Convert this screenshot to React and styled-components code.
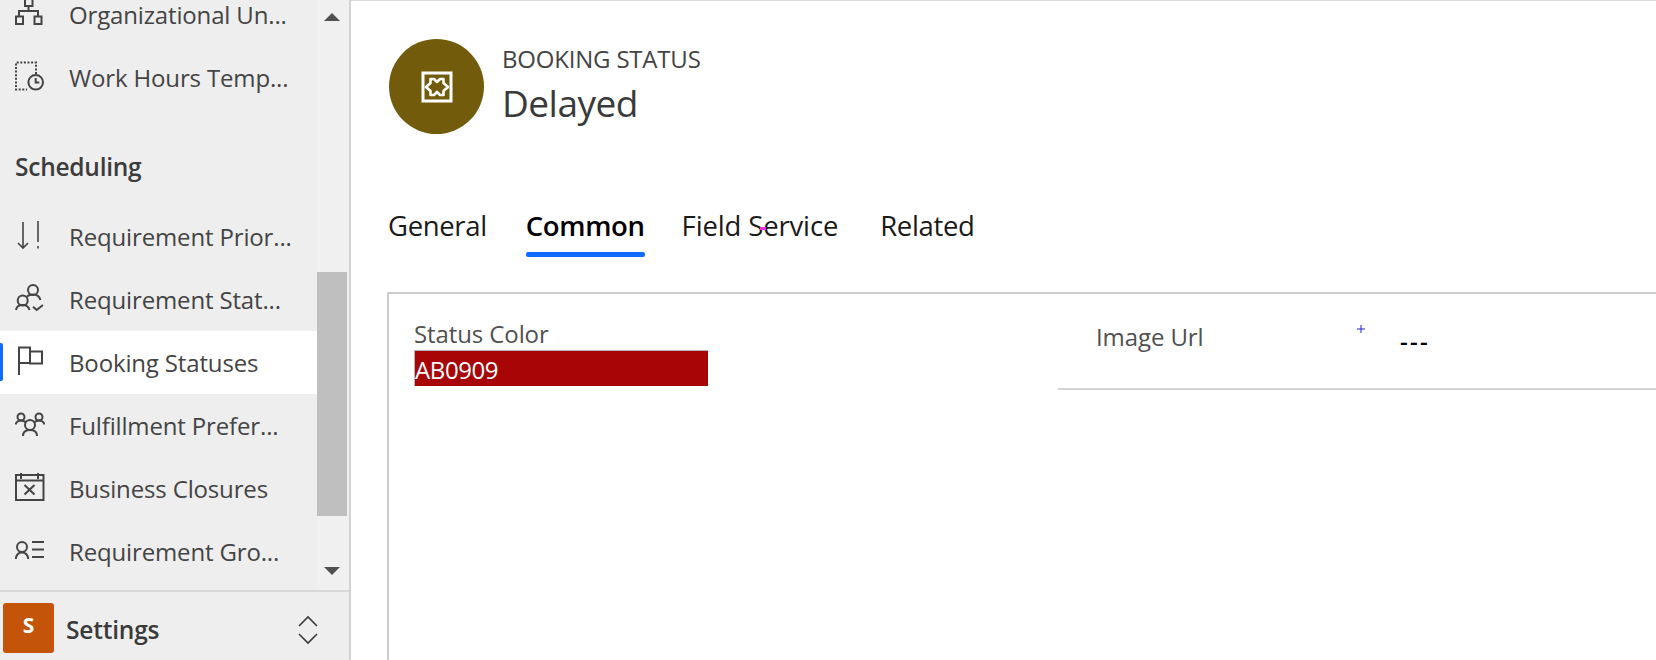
import React from "react";
import styled, { createGlobalStyle } from "styled-components";

const GlobalStyle = createGlobalStyle`
  html, body {
    margin: 0;
    padding: 0;
    height: 100%;
    overflow: hidden;
    background: white;
    font-family: "Open Sans", "Noto Sans", sans-serif;
  }
`;

const Page = styled.div`
  display: flex;
  width: 1656px;
  height: 660px;
  overflow: hidden;
`;

const Sidebar = styled.aside`
  display: flex;
  flex-direction: column;
  width: 351px;
  flex-shrink: 0;
  box-sizing: border-box;
  border-right: 2px solid #d2d2d2;
  background: #eeeeee;
`;

const SidebarBody = styled.div`
  display: flex;
  flex: 1;
  min-height: 0;
  border-bottom: 2px solid #d8d8d8;
`;

const NavList = styled.nav`
  flex: 1;
  min-width: 0;
  overflow: hidden;
`;

// the list is scrolled a little, so the first row is cut by the top edge
const NavInner = styled.div`
  margin-top: -17px;
`;

const NavRow = styled.div`
  position: relative;
  display: flex;
  align-items: center;
  height: 63px;
  padding-left: 15px;
  font-size: 24px;
  line-height: 28px;
  letter-spacing: -0.15px;
  white-space: nowrap;
  color: #444444;
  background: ${(p) => (p.$active ? "#ffffff" : "transparent")};
`;

const ActiveBar = styled.span`
  position: absolute;
  left: 0;
  top: 12px;
  width: 3px;
  height: 38px;
  border-radius: 0 2px 2px 0;
  background: #0f6cff;
`;

const NavIcon = styled.svg`
  width: 30px;
  height: 30px;
  margin-right: 24px;
  margin-top: -3px;
  flex-shrink: 0;
  fill: none;
  stroke: #444444;
  stroke-width: 2;
`;

const SectionTitle = styled.div`
  display: flex;
  align-items: center;
  height: 63px;
  margin: 26px 0 7px;
  padding-left: 15px;
  font-size: 24.5px;
  font-weight: 600;
  letter-spacing: -0.25px;
  color: #3c3c3c;
`;

const Scrollbar = styled.div`
  display: flex;
  flex-direction: column;
  align-items: center;
  width: 32px;
  flex-shrink: 0;
  box-sizing: border-box;
  padding-right: 2px;
  background: #f0f0f0;
`;

const ScrollArrow = styled.div`
  width: 0;
  height: 0;
  margin-top: ${(p) => p.$top}px;
  border-left: 8px solid transparent;
  border-right: 8px solid transparent;
  ${(p) => (p.$down ? "border-top" : "border-bottom")}: 8px solid #505050;
`;

const ScrollThumb = styled.div`
  width: 30px;
  height: 244px;
  margin-top: 251px;
  background: #bfbfbf;
`;

const AreaSwitcher = styled.div`
  display: flex;
  align-items: center;
  height: 68px;
  box-sizing: border-box;
  padding: 4px 0 0 3px;
`;

const AreaBadge = styled.div`
  display: flex;
  align-items: center;
  justify-content: center;
  width: 51px;
  height: 50px;
  box-sizing: border-box;
  padding-bottom: 6px;
  margin-right: 12px;
  border-radius: 3px;
  background: #c4540a;
  color: white;
  font-size: 21px;
  font-weight: 700;
`;

const AreaName = styled.div`
  flex: 1;
  padding-top: 2px;
  font-size: 24.5px;
  font-weight: 600;
  letter-spacing: -0.2px;
  color: #3a3a3a;
`;

const UpDown = styled.svg`
  width: 22px;
  height: 30px;
  margin: 4px 30px 0 0;
  fill: none;
  stroke: #3c3c3c;
  stroke-width: 1.6;
`;

const Main = styled.main`
  flex: 1;
  min-width: 0;
  box-sizing: border-box;
  padding: 38px 0 0 36px;
  border-top: 1px solid #dcdcdc;
  background: white;
`;

const RecordHeader = styled.header`
  display: flex;
  align-items: center;
  gap: 18px;
  padding-left: 2px;
`;

const Avatar = styled.div`
  display: flex;
  align-items: center;
  justify-content: center;
  width: 95px;
  height: 95px;
  border-radius: 50%;
  background: #725c0c;
`;

const TitleBlock = styled.div`
  display: flex;
  flex-direction: column;
  margin-top: -6px;
`;

const EntityName = styled.div`
  font-size: 24px;
  line-height: 39px;
  letter-spacing: -0.2px;
  color: #444444;
`;

const RecordName = styled.div`
  font-size: 37px;
  line-height: 50px;
  letter-spacing: -0.5px;
  color: #3a3a3a;
`;

const TabBar = styled.div`
  display: flex;
  gap: 39px;
  margin-top: 68px;
  padding-left: 1px;
`;

const Tab = styled.div`
  position: relative;
  height: 54px;
  font-size: 27.5px;
  line-height: 48px;
  letter-spacing: -0.35px;
  font-weight: ${(p) => (p.$active ? 600 : 400)};
  color: ${(p) => (p.$active ? "#000000" : "#1a1a1a")};
`;

const FieldServiceTab = styled(Tab)`
  margin: 0 3px 0 -2px;
  letter-spacing: -0.15px;
`;

const TabLine = styled.span`
  position: absolute;
  left: 0;
  right: 0;
  bottom: -1px;
  height: 5px;
  border-radius: 2px;
  background: #0f6cff;
`;

const PinkSpeck = styled.span`
  position: absolute;
  left: 78px;
  top: 25px;
  width: 6px;
  height: 3px;
  background: #f030e0;
`;

const FormCard = styled.section`
  display: grid;
  grid-template-columns: 669px 1fr;
  height: 400px;
  margin-top: 36px;
  border: solid #cccccc;
  border-width: 2px 0 0 2px;
`;

const ColorField = styled.div`
  padding: 24px 0 0 25px;
`;

const FieldLabel = styled.div`
  font-size: 24px;
  line-height: 32px;
  letter-spacing: -0.1px;
  color: #505050;
`;

const ColorValue = styled.div`
  box-sizing: border-box;
  width: 294px;
  height: 36px;
  border: solid #b4b4b4;
  border-width: 1px 0 0 1px;
  background: #a80606;
  color: white;
  font-size: 24px;
  line-height: 38px;
  letter-spacing: -0.4px;
`;

const UrlField = styled.div`
  position: relative;
  display: flex;
  align-items: center;
  height: 96px;
  box-sizing: border-box;
  padding: 0 0 8px 38px;
  border-bottom: 2px solid #d4d4d4;
`;

const UrlLabel = styled(FieldLabel)`
  width: 304px;
`;

const EmptyValue = styled.div`
  margin-top: 6px;
  font-size: 24px;
  font-weight: 600;
  letter-spacing: 2.3px;
  color: #000000;
`;

const BluePlus = styled.svg`
  position: absolute;
  left: 299px;
  top: 31px;
  width: 8px;
  height: 8px;
  stroke: #2020e0;
  stroke-width: 1;
`;

const icons = {
  org: (
    <>
      <rect x="10" y="1" width="7.5" height="7" />
      <path d="M13.5 8v5M4 18.5V13h19v5.5" />
      <rect x="1" y="18.5" width="7" height="7.5" />
      <rect x="19.5" y="18.5" width="7" height="7.5" />
    </>
  ),
  hours: (
    <>
      <path d="M21 13V1.5H1V28.5H12" strokeDasharray="2 1.6" />
      <circle cx="20.7" cy="21.3" r="7.3" />
      <path d="M20.7 17v4.5h3.6" />
    </>
  ),
  priority: (
    <path d="M8 2v26M3 23l5 5 5-5M23 1v21M23 26v2.5" strokeWidth="1.6" />
  ),
  people: (
    <>
      <circle cx="18" cy="7" r="5" />
      <circle cx="7.7" cy="17.5" r="5" />
      <path d="M1 27c.5-3.5 3-5 6.7-5s6 1.500 6.800 5M12 13.500c1.500-1.500 3.500-2 6-2 4 0 6.500 2 7.500 5.500M18 23.700l3.700 3.300 6.300-5" />
    </>
  ),
  flag: (
    <>
      <path d="M4 29V1.500h11V17H4" />
      <rect x="15" y="5.500" width="12" height="12" />
    </>
  ),
  team: (
    <>
      <circle cx="6" cy="8" r="3.500" />
      <circle cx="24" cy="8" r="3.500" />
      <circle cx="15" cy="16" r="5" />
      <path d="M8 27c0-4 3-6 7-6s7 2 7 6M.5 15.500c1-3 3-4 5.500-4s3.500.5 5 2M29.500 15.500c-1-3-3-4-5.500-4s-3.500.5-5 2" />
    </>
  ),
  closure: (
    <>
      <rect x="1" y="3" width="27.500" height="25" />
      <path d="M1 8.500h27.500M6 1v6M23 1v6M9.500 13l10 9.500M19.500 13l-10 9.500" />
    </>
  ),
  group: (
    <>
      <circle cx="7" cy="12" r="5" />
      <path d="M.7 24c.5-4 3-6.500 6.300-6.500s5.800 2.500 6.300 6.500M17 7h12M17 14.500h12M17 22h12" />
    </>
  ),
};

const Row = ({ icon, label, active }) => (
  <NavRow $active={active}>
    {active && <ActiveBar />}
    <NavIcon viewBox="0 0 30 30">{icons[icon]}</NavIcon>
    {label}
  </NavRow>
);

const App = () => {
  return (
    <>
      <GlobalStyle />
      <Page>
        <Sidebar>
          <SidebarBody>
            <NavList>
              <NavInner>
                <Row icon="org" label="Organizational Un..." />
                <Row icon="hours" label="Work Hours Temp..." />
                <SectionTitle>Scheduling</SectionTitle>
                <Row icon="priority" label="Requirement Prior..." />
                <Row icon="people" label="Requirement Stat..." />
                <Row icon="flag" label="Booking Statuses" active />
                <Row icon="team" label="Fulfillment Prefer..." />
                <Row icon="closure" label="Business Closures" />
                <Row icon="group" label="Requirement Gro..." />
              </NavInner>
            </NavList>
            <Scrollbar>
              <ScrollArrow $top={13} />
              <ScrollThumb />
              <ScrollArrow $down $top={51} />
            </Scrollbar>
          </SidebarBody>
          <AreaSwitcher>
            <AreaBadge>S</AreaBadge>
            <AreaName>Settings</AreaName>
            <UpDown viewBox="0 0 22 30">
              <path d="M2 11l9-9 9 9M2 19l9 9 9-9" />
            </UpDown>
          </AreaSwitcher>
        </Sidebar>
        <Main>
          <RecordHeader>
            <Avatar>
              <svg width="34" height="34" viewBox="0 0 34 34" fill="none" stroke="white">
                <rect x="3" y="3" width="28" height="28" strokeWidth="3" />
                <path
                  d="M6 17L10.500 13V9H14L17 12L20 9H23.500V13L28 17L23.500 21V25H20L17 22L14 25H10.500V21Z"
                  strokeWidth="2.600"
                  strokeLinejoin="round"
                />
              </svg>
            </Avatar>
            <TitleBlock>
              <EntityName>BOOKING STATUS</EntityName>
              <RecordName>Delayed</RecordName>
            </TitleBlock>
          </RecordHeader>
          <TabBar>
            <Tab>General</Tab>
            <Tab $active>
              Common
              <TabLine />
            </Tab>
            <FieldServiceTab>
              Field Service
              <PinkSpeck />
            </FieldServiceTab>
            <Tab>Related</Tab>
          </TabBar>
          <FormCard>
            <ColorField>
              <FieldLabel>Status Color</FieldLabel>
              <ColorValue>AB0909</ColorValue>
            </ColorField>
            <div>
              <UrlField>
                <UrlLabel>Image Url</UrlLabel>
                <BluePlus viewBox="0 0 8 8">
                  <path d="M0 4h8M4 0v8" />
                </BluePlus>
                <EmptyValue>---</EmptyValue>
              </UrlField>
            </div>
          </FormCard>
        </Main>
      </Page>
    </>
  );
};

export default App;
